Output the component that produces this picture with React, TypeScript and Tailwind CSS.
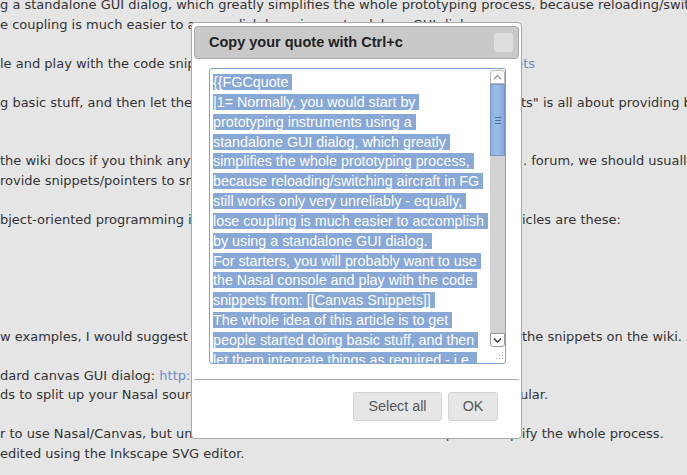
const page = "font-['DejaVu_Sans',sans-serif]";

type Row = { left: string; w?: string; right?: string; rightLink?: boolean; leftLink?: string };

const rows: Row[] = [
  { left: "g a standalone GUI dialog, which greatly simplifies the whole prototyping process, because reloading/switching aircraft" },
  { left: "e coupling is much easier to accomplish by using a standalone GUI dialog." },
  { left: "" },
  { left: "le and play with the code snippets from: Canvas Snip", w: "w-[507px]", right: "pets", rightLink: true },
  { left: "" },
  { left: "g basic stuff, and then let them integrate things as required - i.e. \"Canvas Snippe", w: "w-[521px]", right: "ts\" is all about providing basic examples" },
  { left: "" },
  { left: "" },
  { left: "the wiki docs if you think anything is missing here, or ask on th", w: "w-[523px]", right: ". forum, we should usually" },
  { left: "rovide snippets/pointers to snippets for most things." },
  { left: "" },
  { left: "bject-oriented programming in Nasal, the most relevant art", w: "w-[522px]", right: "icles are these:" },
  { left: "" },
  { left: "" },
  { left: "" },
  { left: "" },
  { left: "" },
  { left: "w examples, I would suggest to get started by looking at ", w: "w-[522px]", right: "the snippets on the wiki." },
  { left: "" },
  { left: "dard canvas GUI dialog: ", leftLink: "http://wiki.flightgear.org/Canvas_Snippets" },
  { left: "ds to split up your Nasal source code into separate files that are more mod", w: "w-[520px]", right: "ular." },
  { left: "" },
  { left: "r to use Nasal/Canvas, but under the hood it makes sense to use helpers to sim", w: "w-[510px]", right: "plify the whole process." },
  { left: "edited using the Inkscape SVG editor." },
];

const quote = [
  "{{FGCquote ",
  "|1= Normally, you would start by ",
  "prototyping instruments using a ",
  "standalone GUI dialog, which greatly ",
  "simplifies the whole prototyping process, ",
  "because reloading/switching aircraft in FG ",
  "still works only very unreliably - equally, ",
  "lose coupling is much easier to accomplish ",
  "by using a standalone GUI dialog. ",
  "For starters, you will probably want to use ",
  "the Nasal console and play with the code ",
  "snippets from: [[Canvas Snippets]] ",
  "The whole idea of this article is to get ",
  "people started doing basic stuff, and then ",
  "let them integrate things as required - i.e. ",
];

function Scrollbar() {
  return (
    <div className="flex w-[15px] shrink-0 flex-col">
      <div className="mt-px flex h-[14px] items-center justify-center rounded-t-[3px] border border-[#b5b5b5] bg-white">
        <svg width="9" height="6" viewBox="0 0 9 6">
          <path d="M1 5 L4.5 1.5 L8 5" fill="none" stroke="#8a8a8a" strokeWidth="1.2" />
        </svg>
      </div>
      <div className="flex h-[72px] items-center justify-center border border-[#7397cb] bg-gradient-to-r from-[#8cafe0] via-[#9dbce8] to-[#86a9da]">
        <div className="flex flex-col gap-[2px]">
          <div className="h-px w-[6px] bg-[#4c6f9f]" />
          <div className="h-px w-[6px] bg-[#4c6f9f]" />
          <div className="h-px w-[6px] bg-[#4c6f9f]" />
        </div>
      </div>
      <div className="flex-1 bg-[#d2d2d2]" />
      <div className="flex h-[14px] items-center justify-center rounded-b-[3px] border border-[#9a9a9a] bg-white">
        <svg width="9" height="6" viewBox="0 0 9 6">
          <path d="M1 1.5 L4.5 5 L8 1.5" fill="none" stroke="#333" strokeWidth="1.4" />
        </svg>
      </div>
      <div className="flex h-[16px] items-end justify-end pb-[2px] pr-[1px]">
        <svg width="10" height="10" viewBox="0 0 10 10" fill="#a9a9a9">
          <rect x="8" y="1" width="1" height="1" />
          <rect x="5" y="4" width="1" height="1" />
          <rect x="8" y="4" width="1" height="1" />
          <rect x="2" y="7" width="1" height="1" />
          <rect x="5" y="7" width="1" height="1" />
          <rect x="8" y="7" width="1" height="1" />
        </svg>
      </div>
    </div>
  );
}

function Dialog() {
  return (
    <div className="absolute left-[191px] top-[22px] flex h-[417px] w-[331px] flex-col rounded-[4px] border border-[#a9a9a9] bg-white font-['Liberation_Sans',Arial,sans-serif]">
      <div className="mx-[2px] mt-[3px] flex h-[33px] items-center justify-between rounded-[4px] border border-[#a8a8a8] bg-[#c9c9c9] pl-[14px] pr-[5px]">
        <span className="pt-px text-[14.5px] font-bold text-[#222]">Copy your quote with Ctrl+c</span>
        <div className="h-[19px] w-[19px] rounded-[3px] bg-[#dedede]" />
      </div>
      <div className="ml-[17px] mt-[9px] flex h-[296px] w-[297px] rounded-[3px] border border-[#7da1d1] bg-white">
        <div className="flex-1 overflow-hidden pl-[3px] pt-[4px] text-[14.3px] leading-[19.85px] text-white">
          {quote.map((q, i) => (
            <div key={i} className="whitespace-pre">
              <span className="bg-[#88a8d8]">{q}</span>
            </div>
          ))}
        </div>
        <Scrollbar />
      </div>
      <div className="mx-[2px] mt-[15px] h-px bg-[#ababab]" />
      <div className="mr-[23px] mt-[12px] flex justify-end gap-[6px] text-[14.3px] text-[#555]">
        <button className="h-[29px] w-[89px] rounded-[3px] border border-[#d3d3d3] bg-[#e6e6e6]">Select all</button>
        <button className="h-[29px] w-[50px] rounded-[3px] border border-[#d3d3d3] bg-[#e6e6e6]">OK</button>
      </div>
    </div>
  );
}

export default function App() {
  return (
    <div className={`relative h-[475px] w-[687px] overflow-hidden bg-[#e5e5e5] ${page}`}>
      <div className="-mt-[5px] text-[13px] leading-[19.5px] text-[#333]">
        {rows.map((r, i) => (
          <div key={i} className="flex h-[19.5px] whitespace-pre">
            <div className={`${r.w ?? "w-[687px]"} shrink-0 overflow-hidden`}>
              {r.left}
              {r.leftLink && <span className="text-[#6a8ec4]">{r.leftLink}</span>}
            </div>
            {r.right && <div className={r.rightLink ? "text-[#6a8ec4]" : ""}>{r.right}</div>}
          </div>
        ))}
      </div>
      <Dialog />
    </div>
  );
}
